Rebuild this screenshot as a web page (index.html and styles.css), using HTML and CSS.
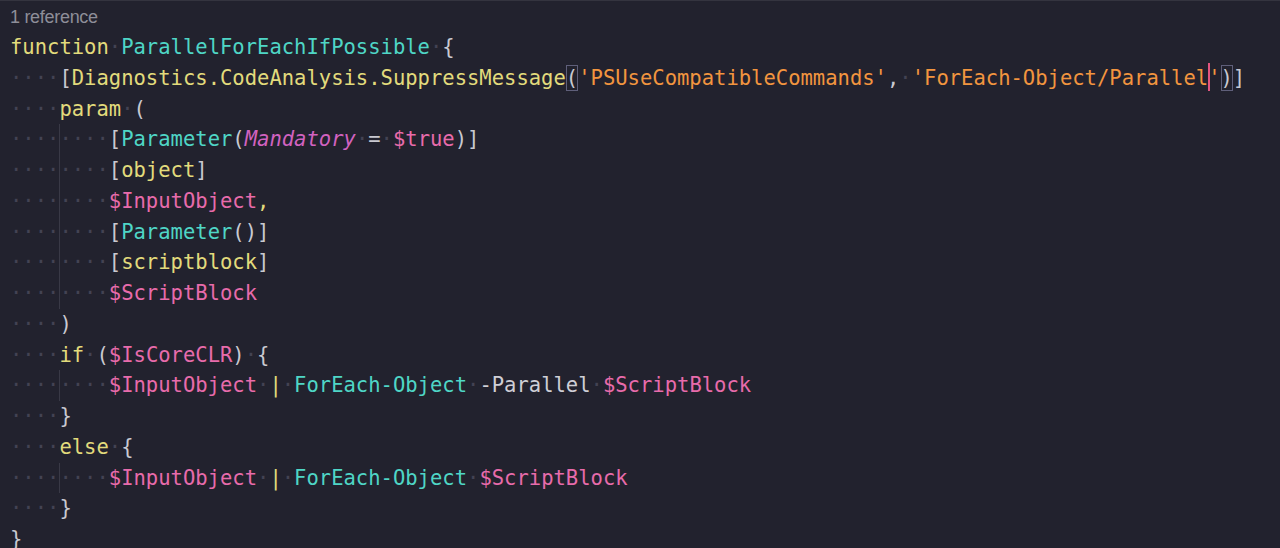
FILE: index.html
```html
<!DOCTYPE html>
<html>
<head>
<meta charset="utf-8">
<link rel="stylesheet" href="styles.css">
</head>
<body>
<div class="editor">
  <div class="lens">1 reference</div>
  <div class="code">
<div class="line"><span class="kw">function</span><span class="ws">·</span><span class="fn">ParallelForEachIfPossible</span><span class="ws">·</span><span class="pn">{</span></div>
<div class="line"><span class="ws">····</span><span class="pn">[</span><span class="kw">Diagnostics.CodeAnalysis.SuppressMessage</span><span class="pn match">(</span><span class="str">'PSUseCompatibleCommands'</span><span class="pn">,</span><span class="ws">·</span><span class="str">'ForEach-Object/Parallel<span class="cursor"></span>'</span><span class="pn match">)</span><span class="pn">]</span></div>
<div class="line"><span class="ws">····</span><span class="kw">param</span><span class="ws">·</span><span class="pn">(</span></div>
<div class="line"><span class="ws">····</span><span class="ws g">····</span><span class="pn">[</span><span class="fn">Parameter</span><span class="pn">(</span><span class="attr">Mandatory</span><span class="ws">·</span><span class="pn">=</span><span class="ws">·</span><span class="var">$true</span><span class="pn">)]</span></div>
<div class="line"><span class="ws">····</span><span class="ws g">····</span><span class="pn">[</span><span class="kw">object</span><span class="pn">]</span></div>
<div class="line"><span class="ws">····</span><span class="ws g">····</span><span class="var">$InputObject</span><span class="kw">,</span></div>
<div class="line"><span class="ws">····</span><span class="ws g">····</span><span class="pn">[</span><span class="fn">Parameter</span><span class="pn">()]</span></div>
<div class="line"><span class="ws">····</span><span class="ws g">····</span><span class="pn">[</span><span class="kw">scriptblock</span><span class="pn">]</span></div>
<div class="line"><span class="ws">····</span><span class="ws g">····</span><span class="var">$ScriptBlock</span></div>
<div class="line"><span class="ws">····</span><span class="pn">)</span></div>
<div class="line"><span class="ws">····</span><span class="kw">if</span><span class="ws">·</span><span class="pn">(</span><span class="var">$IsCoreCLR</span><span class="pn">)</span><span class="ws">·</span><span class="pn">{</span></div>
<div class="line"><span class="ws">····</span><span class="ws g">····</span><span class="var">$InputObject</span><span class="ws">·</span><span class="kw">|</span><span class="ws">·</span><span class="fn">ForEach-Object</span><span class="ws">·</span><span class="param">-Parallel</span><span class="ws">·</span><span class="var">$ScriptBlock</span></div>
<div class="line"><span class="ws">····</span><span class="pn">}</span></div>
<div class="line"><span class="ws">····</span><span class="kw">else</span><span class="ws">·</span><span class="pn">{</span></div>
<div class="line"><span class="ws">····</span><span class="ws g">····</span><span class="var">$InputObject</span><span class="ws">·</span><span class="kw">|</span><span class="ws">·</span><span class="fn">ForEach-Object</span><span class="ws">·</span><span class="var">$ScriptBlock</span></div>
<div class="line"><span class="ws">····</span><span class="pn">}</span></div>
<div class="line"><span class="pn">}</span></div>
  </div>
</div>
</body>
</html>
```

FILE: styles.css
```css
html, body {
  margin: 0;
  padding: 0;
  background: #22222e;
  overflow: hidden;
}
.editor {
  height: 548px;
  border-top: 1px solid #34343f;
  box-sizing: border-box;
  padding-left: 10px;
}
.lens {
  height: 31px;
  line-height: 33px;
  font-family: "Liberation Sans", Arial, sans-serif;
  font-size: 18px;
  color: #8e8e99;
  letter-spacing: -0.3px;
}
.code {
  font-family: "DejaVu Sans Mono", monospace;
  font-size: 20.52px;
  color: #c9c9d1;
}
.line {
  height: 30.75px;
  line-height: 30.75px;
  white-space: pre;
}
.ws { color: #434353; }
.g {
  display: inline-block;
  box-shadow: inset 1px 0 0 #393946;
}
.kw { color: #e2db7c; }
.fn { color: #4fd6c6; }
.str { color: #f2953f; }
.var { color: #e86bab; }
.attr { color: #d262c0; font-style: italic; }
.pn { color: #c9c9d1; }
.param { color: #cfcfd6; }
.match {
  display: inline-block;
  line-height: 26px;
  box-shadow: inset 0 0 0 1px #5f5f7a;
}
.cursor {
  display: inline-block;
  width: 0;
  height: 28px;
  vertical-align: -6px;
  border-left: 2px solid #e2557f;
  margin-right: -2px;
}
```
